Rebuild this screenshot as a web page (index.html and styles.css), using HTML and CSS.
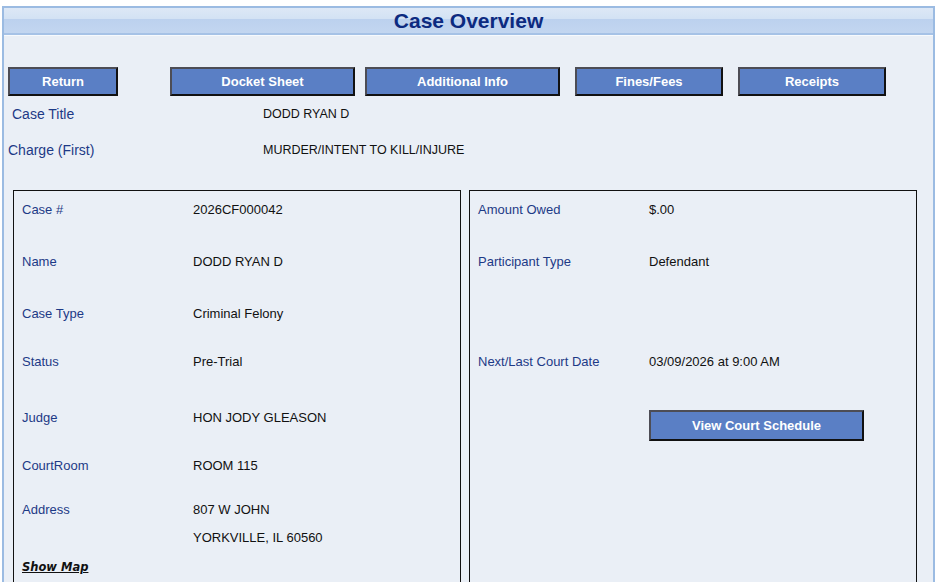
FILE: index.html
```html
<!DOCTYPE html>
<html lang="en">
<head>
  <meta charset="UTF-8" />
  <meta name="viewport" content="width=device-width, initial-scale=1.0" />
  <title>Case Overview</title>
  <link rel="stylesheet" href="styles.css">
</head>
<body>
  <div class="panel">
    <div class="panel-header">Case Overview</div>

    <div class="nav-buttons">
      <button class="btn btn-return">Return</button>
      <button class="btn btn-docket">Docket Sheet</button>
      <button class="btn btn-info">Additional Info</button>
      <button class="btn btn-fines">Fines/Fees</button>
      <button class="btn btn-receipts">Receipts</button>
    </div>

    <div class="summary">
      <div class="summary-row">
        <span class="label indent">Case Title</span>
        <span class="summary-value">DODD RYAN D</span>
      </div>
      <div class="summary-row">
        <span class="label">Charge (First)</span>
        <span class="summary-value">MURDER/INTENT TO KILL/INJURE</span>
      </div>
    </div>

    <div class="boxes">
      <div class="box">
        <div class="row h52"><span class="label">Case #</span><span class="value">2026CF000042</span></div>
        <div class="row h52"><span class="label">Name</span><span class="value">DODD RYAN D</span></div>
        <div class="row h48"><span class="label">Case Type</span><span class="value">Criminal Felony</span></div>
        <div class="row h56"><span class="label">Status</span><span class="value">Pre-Trial</span></div>
        <div class="row h48"><span class="label">Judge</span><span class="value">HON JODY GLEASON</span></div>
        <div class="row h44"><span class="label">CourtRoom</span><span class="value">ROOM 115</span></div>
        <div class="row h28"><span class="label">Address</span><span class="value">807 W JOHN</span></div>
        <div class="row h29"><span class="label"></span><span class="value">YORKVILLE, IL 60560</span></div>
        <div class="row"><a class="map-link" href="#">Show Map</a></div>
      </div>

      <div class="box">
        <div class="row h52"><span class="label">Amount Owed</span><span class="value">$.00</span></div>
        <div class="row h100"><span class="label">Participant Type</span><span class="value">Defendant</span></div>
        <div class="row h57"><span class="label">Next/Last Court Date</span><span class="value">03/09/2026 at 9:00 AM</span></div>
        <div class="row"><span class="label"></span><button class="btn btn-schedule">View Court Schedule</button></div>
      </div>
    </div>
  </div>
</body>
</html>
```

FILE: styles.css
```css
* {
  margin: 0;
  padding: 0;
  box-sizing: border-box;
}
body {
  font-family: "Liberation Sans", Arial, sans-serif;
  background: #fff;
  overflow: hidden;
}
.panel {
  margin: 6px 5px 0 2px;
  height: calc(100vh - 6px);
  overflow: hidden;
  border: 2px solid #9bbbe2;
  border-bottom: none;
  background: #eaeff6;
}
.panel-header {
  height: 27px;
  background: linear-gradient(#dde8f6 0%, #d3e2f4 42%, #bcd1ee 46%, #c3d6f0 100%);
  border-bottom: 2px solid #a6c2e6;
  box-shadow: 0 1px 0 #f7fafd;
  color: #0c2a80;
  font-size: 21px;
  font-weight: bold;
  text-align: center;
  line-height: 25px;
}
.nav-buttons {
  display: flex;
  padding: 32px 0 0 4px;
}
.btn {
  height: 29px;
  background: #5a7fc5;
  color: #fff;
  font-family: "Liberation Sans", Arial, sans-serif;
  font-size: 13px;
  font-weight: bold;
  border: 2px solid;
  border-color: #4d4d55 #111 #111 #4d4d55;
  cursor: pointer;
}
.btn-return { width: 110px; }
.btn-docket { width: 185px; margin-left: 52px; }
.btn-info { width: 195px; margin-left: 10px; }
.btn-fines { width: 148px; margin-left: 15px; }
.btn-receipts { width: 148px; margin-left: 15px; }
.btn-schedule { width: 215px; height: 31px; }

.summary {
  padding: 9px 0 0 4px;
}
.summary-row {
  display: flex;
  height: 36px;
  line-height: 18px;
}
.summary-row .label {
  width: 255px;
  font-size: 14px;
}
.summary-row .label.indent {
  padding-left: 4px;
}
.summary-value {
  font-size: 12.5px;
  color: #111;
}
.label {
  color: #1d3a86;
}
.boxes {
  display: flex;
  gap: 8px;
  padding: 13px 0 0 9px;
}
.box {
  width: 448px;
  height: 420px;
  border: 1px solid #111;
  padding: 11px 0 0 8px;
}
.row {
  display: flex;
  line-height: 16px;
  font-size: 13px;
}
.row .label {
  width: 171px;
  flex-shrink: 0;
}
.value {
  color: #111;
}
.h28 { height: 28px; }
.h29 { height: 29px; }
.h44 { height: 44px; }
.h48 { height: 48px; }
.h52 { height: 52px; }
.h56 { height: 56px; }
.h57 { height: 56px; }
.h100 { height: 100px; }
.map-link {
  font-family: "DejaVu Sans", Verdana, sans-serif;
  font-size: 11.5px;
  font-weight: bold;
  font-style: italic;
  color: #111;
  text-decoration: underline;
}
```
